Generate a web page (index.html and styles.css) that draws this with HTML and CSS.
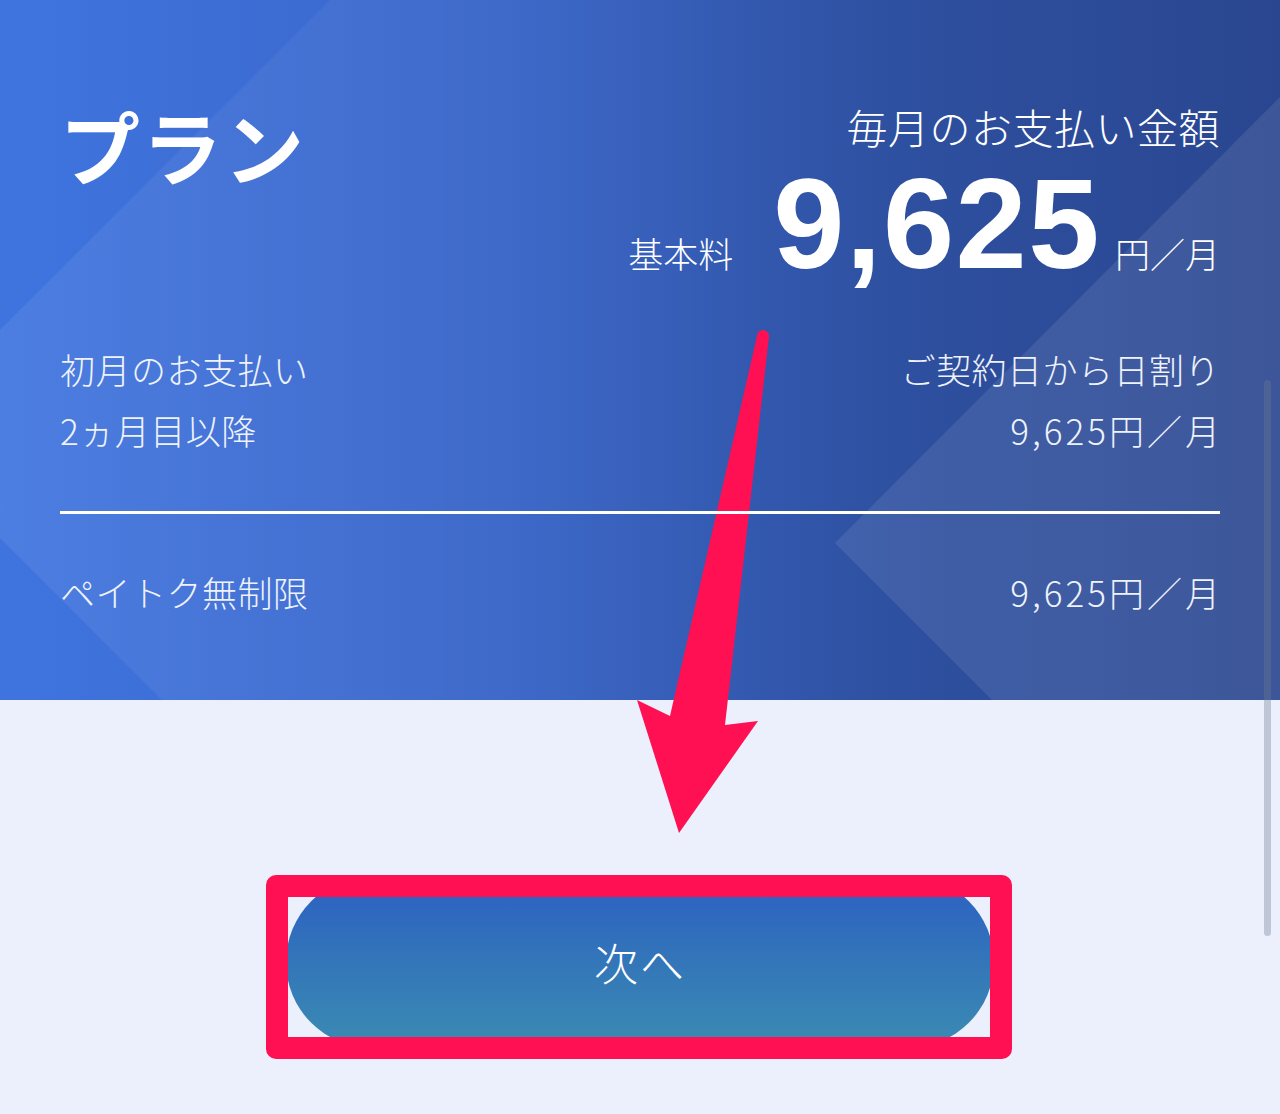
FILE: index.html
```html
<!DOCTYPE html>
<html lang="ja">
<head>
  <meta charset="UTF-8">
  <meta name="viewport" content="width=device-width, initial-scale=1.0">
  <title>プラン</title>
  <link rel="stylesheet" href="styles.css">
</head>
<body>
  <div class="screen">
    <section class="plan-hero">
      <div class="hero-top">
        <h1>プラン</h1>
        <div class="monthly">
          <p class="monthly-label">毎月のお支払い金額</p>
          <p class="monthly-price">
            <span class="price-note">基本料</span>
            <span class="price-num">9,625</span>
            <span class="price-unit">円／月</span>
          </p>
        </div>
      </div>

      <div class="fee-list">
        <div class="fee-row">
          <span>初月のお支払い</span>
          <span>ご契約日から日割り</span>
        </div>
        <div class="fee-row">
          <span>2ヵ月目以降</span>
          <span class="fee-amount">9,625円／月</span>
        </div>
      </div>

      <hr class="divider">

      <div class="fee-row option-row">
        <span>ペイトク無制限</span>
        <span class="fee-amount">9,625円／月</span>
      </div>
    </section>

    <div class="actions">
      <div class="next-wrap">
        <button class="next-btn" type="button">次へ</button>
      </div>
    </div>

    <!-- scroll indicator -->
    <div class="scroll-thumb"></div>

    <!-- annotation arrow -->
    <svg class="arrow" width="1280" height="1114" viewBox="0 0 1280 1114">
      <polygon points="757,336 670,716 637,700 679,833 758,721 725,725 769,336" fill="#ff1053"/>
      <circle cx="763" cy="336" r="6" fill="#ff1053"/>
    </svg>
  </div>
</body>
</html>
```

FILE: styles.css
```css
body {
  margin: 0;
  font-family: "Noto Sans CJK JP", "Noto Sans", sans-serif;
  background-color: #ebf0fc;
}
.screen {
  position: relative;
  width: 1280px;
  height: 1114px;
  overflow: hidden;
}
.plan-hero {
  position: relative;
  height: 700px;
  box-sizing: border-box;
  padding: 104px 60px 0;
  color: #fff;
  background: linear-gradient(90deg, #3f74df 0%, #3a66c8 40%, #2e50a0 70%, #2a4690 100%);
}
/* light diagonal shapes in the background */
.plan-hero::before,
.plan-hero::after {
  content: "";
  position: absolute;
  inset: 0;
}
.plan-hero::before {
  background: linear-gradient(90deg, rgba(255,255,255,0.07), rgba(255,255,255,0) 60%);
  clip-path: polygon(330px 0, 1280px 0, 1280px 700px, 162px 700px, 0 538px, 0 330px);
}
.plan-hero::after {
  background: rgba(255,255,255,0.09);
  clip-path: polygon(1280px 97px, 835px 543px, 992px 700px, 1280px 700px);
}
.hero-top,
.fee-list,
.divider,
.option-row {
  position: relative;
  z-index: 1;
}
.hero-top {
  display: flex;
  justify-content: space-between;
  align-items: flex-start;
}
h1 {
  margin: 0;
  font-size: 80px;
  line-height: 80px;
  font-weight: 700;
  letter-spacing: 2px;
}
.monthly {
  text-align: right;
}
.monthly-label {
  margin: 0;
  font-size: 41px;
  line-height: 44px;
  font-weight: 300;
  letter-spacing: 0.5px;
}
.monthly-price {
  margin: 12px 0 0;
  display: flex;
  justify-content: flex-end;
  align-items: baseline;
}
.price-note,
.price-unit {
  font-size: 35px;
  font-weight: 300;
}
.price-num {
  margin: 0 14px 0 40px;
  font-family: "Liberation Sans", Arial, sans-serif;
  font-size: 128px;
  line-height: 128px;
  font-weight: 700;
  letter-spacing: 1.5px;
}
.fee-list {
  margin-top: 50px;
}
.fee-row {
  display: flex;
  justify-content: space-between;
  font-size: 35px;
  line-height: 61px;
  font-weight: 300;
  letter-spacing: 0.5px;
  color: #eef2fb;
}
.fee-amount {
  letter-spacing: 3px;
  margin-right: -3px;
}
.divider {
  margin: 51px 0 0;
  border: 0;
  height: 3px;
  background-color: #fff;
}
.option-row {
  margin-top: 47px;
}
.actions {
  display: flex;
  justify-content: center;
  padding-top: 176px;
}
.next-wrap {
  position: relative;
}
.next-wrap::after {
  content: "";
  position: absolute;
  top: -1px;
  left: -20px;
  right: -18px;
  bottom: -11px;
  border: 22px solid #ff1053;
  border-radius: 10px;
  pointer-events: none;
}
.next-btn {
  display: block;
  width: 708px;
  height: 172px;
  border: 0;
  border-radius: 86px;
  background: linear-gradient(180deg, #2b5fc3 0%, #3478b8 55%, #3a8bb3 100%);
  color: #fff;
  font-family: "Noto Sans CJK JP", sans-serif;
  font-size: 44px;
  font-weight: 300;
  letter-spacing: 2px;
  padding: 0;
}
.scroll-thumb {
  position: absolute;
  top: 380px;
  right: 9px;
  width: 7px;
  height: 556px;
  border-radius: 4px;
  background-color: rgba(110, 120, 140, 0.35);
}
.arrow {
  position: absolute;
  top: 0;
  left: 0;
  pointer-events: none;
}
```
